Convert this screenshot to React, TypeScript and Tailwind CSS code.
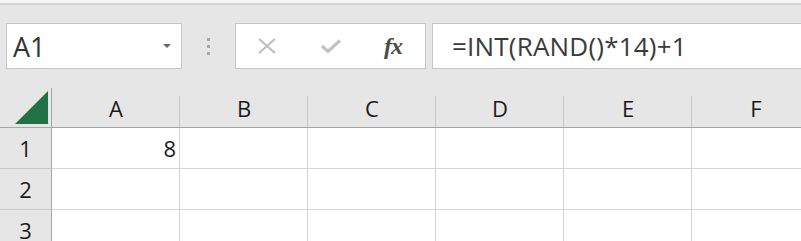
import React from 'react'

const cols = ['A', 'B', 'C', 'D', 'E', 'F']
const rows = [1, 2, 3]

const values: Record<string, string> = { A1: '8' }

export default function App() {
  return (
    <div className="w-[801px] h-[241px] overflow-hidden bg-[#e6e6e6] font-['Open_Sans',sans-serif]">
      {/* top strip */}
      <div className="h-[3px] bg-[#f3f3f3]" />
      <div className="h-[2px] bg-[#d4d4d4]" />

      {/* formula bar */}
      <div className="h-[83px] flex items-start pt-[18px] pl-[6px]">
        <div className="w-[176px] h-[46px] bg-white border border-[#c6c6c6] flex items-center pl-[6px] pr-[10px]">
          <span className="text-[27px] text-[#333] leading-none">A1</span>
          <span className="ml-auto w-0 h-0 border-l-[4px] border-r-[4px] border-t-[4px] border-l-transparent border-r-transparent border-t-[#666]" />
        </div>
        <div className="w-[53px] h-[46px] flex flex-col items-center justify-center gap-[4px]">
          <span className="w-[3px] h-[3px] bg-[#a6a6a6]" />
          <span className="w-[3px] h-[3px] bg-[#a6a6a6]" />
          <span className="w-[3px] h-[3px] bg-[#a6a6a6]" />
        </div>
        <div className="w-[191px] h-[46px] bg-white border border-[#c6c6c6] flex items-center">
          <svg width="18" height="16" viewBox="0 0 18 16" className="ml-[22px]">
            <path d="M1 1 L17 15 M17 1 L1 15" stroke="#bdbdbd" strokeWidth="2" fill="none" />
          </svg>
          <svg width="20" height="14" viewBox="0 0 20 14" className="ml-[45px]">
            <path d="M1 7 L7 12.5 L19 1.5" stroke="#c2c2c2" strokeWidth="3.2" fill="none" />
          </svg>
          <span className="ml-[43px] text-[24px] leading-none italic text-[#4a4a4a] font-['Liberation_Serif',serif] font-semibold tracking-[-1px]">fx</span>
        </div>
        <div className="ml-[6px] flex-1 h-[46px] bg-white border border-r-0 border-[#c6c6c6] flex items-center pl-[19px]">
          <span className="text-[26px] leading-none text-[#3a3a3a] tracking-[0.2px]">=INT(RAND()*14)+1</span>
        </div>
      </div>

      {/* grid */}
      <div className="grid grid-cols-[52px_repeat(6,128px)] text-[22px] text-[#1a1a1a]">
        <div className="h-[40px] border-r border-b border-[#a6a6a6] flex items-end justify-end pr-[3px] pb-[3px]">
          <svg width="33" height="33">
            <polygon points="33,0 33,33 0,33" fill="#217346" />
          </svg>
        </div>
        {cols.map((c) => (
          <div key={c} className="h-[40px] border-b border-[#a6a6a6] flex items-center justify-center relative">
            <span className="leading-none">{c}</span>
            <span className="absolute right-0 bottom-0 top-[8px] w-px bg-[#c8c8c8]" />
          </div>
        ))}
        {rows.map((r) => (
          <React.Fragment key={r}>
            <div className="h-[41px] border-r border-b border-r-[#a6a6a6] border-b-[#c8c8c8] flex items-center justify-center">
              <span className="leading-none">{r}</span>
            </div>
            {cols.map((c) => (
              <div key={c + r} className="h-[41px] bg-white border-r border-b border-[#d4d4d4] flex items-center justify-end pr-[3px]">
                <span className="leading-none">{values[c + r] ?? ''}</span>
              </div>
            ))}
          </React.Fragment>
        ))}
      </div>
    </div>
  )
}
